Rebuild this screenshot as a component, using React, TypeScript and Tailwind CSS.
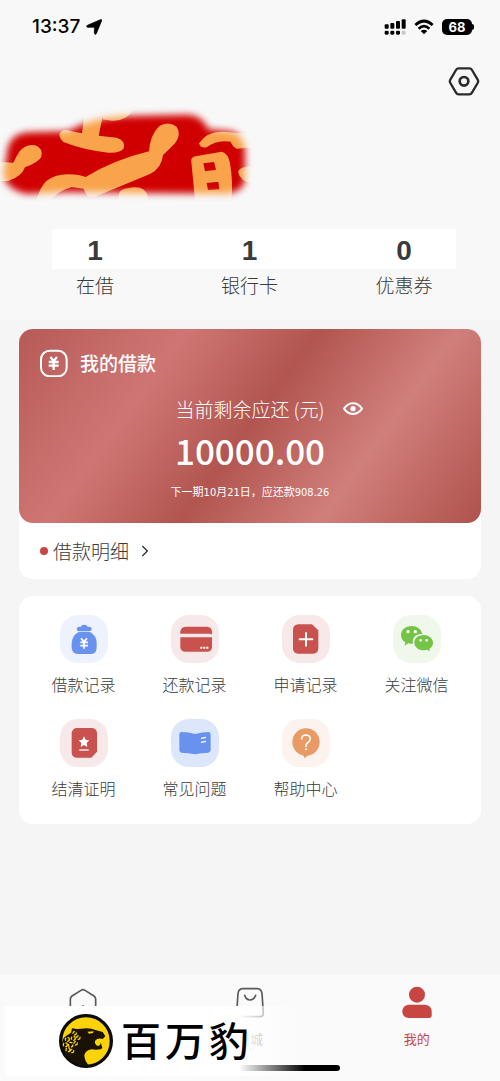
import React from 'react';

const stats = [
  { label: '在借', value: '1' },
  { label: '银行卡', value: '1' },
  { label: '优惠券', value: '0' },
];

const StatusBar: React.FC = () => (
  <div className="flex h-[54px] items-center justify-between pl-8 pr-[26px]">
    <div className="flex items-center gap-1.5">
      <span className="font-['Inter',sans-serif] text-[19px] font-medium leading-6 text-black">13:37</span>
      <svg className="h-4 w-4" viewBox="0 0 48 48">
        <path d="M43 2Q48 0 47 5L31 44Q27 49 25 43V28Q25 25 22 25H5Q-1 23 4 19Z" stroke="#000" strokeWidth="2" />
      </svg>
    </div>
    <div className="flex items-center gap-2">
      <svg className="h-4 w-[22px]" viewBox="0 0 66 48">
        <rect x="2" y="16" width="12" height="13" rx="3" />
        <rect x="19" y="12" width="12" height="17" rx="3" />
        <rect x="36" y="6" width="12" height="23" rx="3" />
        <rect x="53" y="1" width="12" height="28" rx="3" />
        <rect x="2" y="35" width="12" height="12" rx="4" />
        <rect x="19" y="35" width="12" height="12" rx="4" />
        <rect x="36" y="35" width="12" height="12" rx="4" />
        <rect x="53" y="35" width="12" height="12" rx="4" fill="#c9c9c9" />
      </svg>
      <svg className="h-4 w-5" viewBox="0 0 60 48" fill="none" stroke="#000" strokeWidth="8">
        <path d="M4 18Q30-6 56 18" />
        <path d="M14 29Q30 14 46 29" />
        <path d="M30 46L20 36Q30 28 40 36Z" fill="#000" stroke="none" />
      </svg>
      <div className="flex items-center">
        <span className="flex h-4 w-[30px] items-center justify-center rounded-[5px] bg-black font-['Inter',sans-serif] text-[13px] font-bold leading-4 text-white">
          68
        </span>
        <span className="h-1.5 w-0.5 rounded-r bg-black" />
      </div>
    </div>
  </div>
);

const Scribble: React.FC = () => (
  <svg className="mt-[3px] block h-[110px] w-[260px]" viewBox="0 0 780 330">
    <defs>
      <filter id="soft" x="-10%" y="-20%" width="120%" height="140%" colorInterpolationFilters="sRGB">
        <feGaussianBlur stdDeviation="11" />
      </filter>
      <mask id="smear" maskUnits="userSpaceOnUse" x="0" y="0" width="780" height="330">
        <path
          fill="#fff"
          filter="url(#soft)"
          d="M20 170Q22 98 90 97L205 94Q280 50 390 48L560 44Q605 44 625 88L690 94Q735 102 735 160V240Q730 275 680 281L400 279L200 276L80 282Q10 265 10 215Z"
        />
      </mask>
    </defs>
    <g mask="url(#smear)">
      <rect width="780" height="330" fill="#d00000" />
      <g fill="#f9a34b">
        <path d="M0 186L40 188Q48 170 58 155Q78 130 105 136Q130 145 124 170Q118 185 75 202Q65 230 25 243H0Z" />
        <path d="M254 40H310L296 107L350 113Q378 122 371 145Q362 160 325 158Q250 150 190 126Q170 108 184 94Q195 86 215 94L246 100Z" />
        <path d="M310 30H400Q375 65 335 62L308 58Z" />
        <path d="M110 300Q120 260 140 242Q170 222 205 223Q240 224 257 231Q340 180 447 154Q450 105 478 78Q505 62 530 80Q545 105 525 130Q507 149 489 165Q485 205 450 222L285 290H265Q255 280 251 266L215 261Q180 270 150 300Z" />
        <path d="M355 290Q355 268 385 264Q435 255 443 288V300H355Z" />
        <path d="M597 130Q620 95 665 95Q700 97 723 100H760V142L710 146Q697 140 692 125Q650 118 620 142Q600 145 597 130Z" />
        <path d="M574 185Q570 172 590 168L665 155Q685 160 690 190Q700 250 694 300H585ZM610 190L615 214L648 209L642 186ZM620 249L624 270L658 268L655 245Z" fillRule="evenodd" />
        <path d="M714 215Q722 198 760 200V250Q720 245 714 215Z" />
      </g>
    </g>
  </svg>
);

const services = [
  {
    name: '借款记录',
    tile: 'bg-[#edf2fe]',
    icon: (
      <>
        <path d="M57 49Q48 47 51 39Q55 34 61 36Q66 28 73 29Q80 29 84 36Q92 34 95 40Q96 47 88 49Z" fill="#6992ef" />
        <path d="M56 51H90Q110 62 110 84V98Q109 117 92 117H53Q36 115 35 98V84Q36 61 56 51Z" fill="#6992ef" />
        <path d="M63 70L72 80L81 70M72 80V101M61 82H84M61 92H84" fill="none" stroke="#fff" strokeWidth="5" />
      </>
    ),
  },
  {
    name: '还款记录',
    tile: 'bg-[#f7e9ea]',
    icon: (
      <>
        <path d="M28 56V49Q31 36 43 35H108Q122 36 123 49V59Q120 56 116 56Z" fill="#c9524f" />
        <path d="M28 67H123V98Q121 109 109 110H43Q30 109 28 98Z" fill="#c9524f" />
        <path d="M88 98H94M97 98H103M106 98H112" stroke="#fff" strokeWidth="6" />
      </>
    ),
  },
  {
    name: '申请记录',
    tile: 'bg-[#f7e9ea]',
    icon: (
      <>
        <path d="M49 28H90L109 46V101Q108 115 94 116H48Q34 115 33 101V44Q34 29 49 28Z" fill="#c9524f" />
        <path d="M72 54V92M53 73H91" stroke="#fff" strokeWidth="6" strokeLinecap="round" />
      </>
    ),
  },
  {
    name: '关注微信',
    tile: 'bg-[#f0f8eb]',
    icon: (
      <>
        <path d="M56 33C38 33 24 44 24 60C24 69 29 77 37 82L35 92L46 85Q52 87 60 86C56 68 70 55 88 57C85 43 72 33 56 33Z" fill="#74c448" />
        <path d="M92 60C75 60 64 71 64 83C64 96 77 106 92 106L102 104L111 109L109 101C116 97 120 91 120 83C120 70 107 60 92 60Z" fill="#74c448" />
        <circle cx="45" cy="50" r="5" fill="#fff" />
        <circle cx="67" cy="50" r="5" fill="#fff" />
        <circle cx="83" cy="76" r="4" fill="#fff" />
        <circle cx="101" cy="76" r="4" fill="#fff" />
      </>
    ),
  },
  {
    name: '结清证明',
    tile: 'bg-[#f7e9ea]',
    icon: (
      <>
        <path d="M49 27H96Q110 29 111 42V98L94 116H49Q36 114 35 101V43Q36 29 49 27Z" fill="#c9524f" />
        <path d="M72 52L77 62L88 64L80 72L82 84L72 78L62 84L64 72L56 64L67 62Z" fill="#fff" />
        <path d="M58 93H86" stroke="#fff" strokeWidth="4" />
      </>
    ),
  },
  {
    name: '常见问题',
    tile: 'bg-[#dce7fc]',
    icon: (
      <>
        <path d="M31 39Q52 39 73 45Q94 39 113 39Q119 40 119 46V94Q118 100 112 101Q92 102 72 106Q52 102 31 101Q25 99 25 94V45Q26 39 31 39Z" fill="#6992ef" />
        <path d="M90 58L105 55M90 70L105 67" stroke="#fff" strokeWidth="4" />
      </>
    ),
  },
  {
    name: '帮助中心',
    tile: 'bg-[#fcf3ee]',
    icon: (
      <>
        <circle cx="72" cy="69" r="41" fill="#e99b66" />
        <path d="M62 106L68 118L80 107Z" fill="#e99b66" />
        <path d="M59 60Q59 48 72 48Q85 49 85 60Q84 67 77 71Q72 75 72 82" fill="none" stroke="#fff" strokeWidth="5" strokeLinecap="round" />
        <circle cx="72" cy="91" r="3" fill="#fff" />
      </>
    ),
  },
];

const Leopard: React.FC = () => (
  <svg className="h-[54px] w-[54px]" viewBox="178 136 162 162">
    <circle cx="259" cy="217" r="76" fill="#fbd307" stroke="#0c0a08" strokeWidth="10" />
    <path
      fill="#1a1206"
      d="M214 192L217 179L232 181L244 180Q272 176 287 184L309 190L317 203L309 211Q293 207 286 217Q284 228 295 232Q304 230 303 220L308 238L303 242Q288 244 276 242Q257 246 254 259Q254 278 270 292Q205 297 186 230Q188 209 198 203Z"
    />
    <path d="M263 189L282 188L280 193L268 195Z" fill="#fbd307" />
    <g fill="none" stroke="#fbd307" strokeWidth="4" strokeDasharray="9 4">
      <circle cx="203" cy="212" r="6" />
      <circle cx="221" cy="209" r="6" />
      <circle cx="236" cy="207" r="5" />
      <circle cx="197" cy="228" r="6" />
      <circle cx="213" cy="228" r="7" />
      <circle cx="228" cy="224" r="5" />
      <circle cx="205" cy="243" r="6" />
      <circle cx="217" cy="247" r="5" />
      <circle cx="225" cy="194" r="5" />
    </g>
  </svg>
);

const BottomNav: React.FC = () => (
  <nav className="relative mt-auto bg-[#fafafa] pb-2.5 pt-[11px]">
    <div className="grid grid-cols-3 text-[13px] leading-[18px]">
      <a href="#home" aria-label="首页" className="flex flex-col items-center">
        <svg className="h-8 w-8" viewBox="0 0 96 96" fill="none" stroke="#5a5a5a" strokeWidth="5">
          <path d="M10 82V40Q10 34 15 30L42 13Q48 9 54 13L81 30Q86 34 86 40V82Q86 90 78 90H18Q10 90 10 82Z" />
          <path d="M48 58V72" />
        </svg>
      </a>
      <a href="#mall" className="flex flex-col items-center gap-3 text-[#777]">
        <svg className="h-8 w-8" viewBox="0 0 96 96" fill="none" stroke="#5a5a5a" strokeWidth="5">
          <path d="M26 8H70Q82 9 84 22L88 82Q88 92 78 92H18Q8 92 8 82L12 22Q14 9 26 8Z" />
          <path d="M32 28Q36 42 48 42Q60 42 65 28" strokeLinecap="round" />
        </svg>
        <span>商城</span>
      </a>
      <a href="#mine" className="flex flex-col items-center gap-3 text-[#c74642]">
        <svg className="h-8 w-8" viewBox="0 0 96 96" fill="currentColor">
          <circle cx="48" cy="26" r="24" />
          <path d="M22 56H72Q92 58 92 76V90Q91 96 84 96H22Q4 94 4 76Q5 58 22 56Z" />
        </svg>
        <span>我的</span>
      </a>
    </div>
    <div className="mx-auto mt-[17px] h-1.5 w-[180px] rounded-full bg-black" />

    {/* Brand overlay */}
    <div className="absolute left-[5px] top-[31px] flex h-[70px] w-[300px] items-center gap-2 bg-linear-to-r from-white from-78% to-transparent pl-[54px]">
      <Leopard />
      <div className="flex gap-1 pb-1 text-[40px] font-medium leading-[54px] text-black">
        <span>百</span>
        <span>万</span>
        <span>豹</span>
      </div>
    </div>
  </nav>
);

const App: React.FC = () => {
  return (
    <div className="flex min-h-screen flex-col bg-[#f5f5f5] font-['Noto_Sans_CJK_SC',sans-serif] text-[#3a3a3a]">
      <header className="bg-[#f8f8f8] pb-[21px]">
        <StatusBar />
        <div className="flex justify-end pr-5 pt-3">
          <button type="button" aria-label="设置">
            <svg className="block h-[31px] w-8" viewBox="0 0 96 93" fill="none" stroke="#2b2b2b" strokeWidth="7" strokeLinejoin="round">
              <path d="M32 7H64Q69 7 72 12L89 41Q92 46 89 51L72 80Q69 85 64 85H32Q27 85 24 80L7 51Q4 46 7 41L24 12Q27 7 32 7Z" />
              <circle cx="48" cy="46" r="13" strokeWidth="8" />
            </svg>
          </button>
        </div>
        <Scribble />

        <div className="ml-[52px] mr-11 mt-[19px] flex h-10 items-center justify-between bg-white pr-[9px] pt-1">
          {stats.map((s) => (
            <span key={s.label} className="w-[86px] text-center font-['Liberation_Sans',sans-serif] text-[28px] font-bold leading-8">
              {s.value}
            </span>
          ))}
        </div>
        <div className="ml-[52px] mr-11 mt-0.5 flex justify-between pr-[9px]">
          {stats.map((s) => (
            <span key={s.label} className="w-[86px] text-center text-[19px] font-light leading-7">
              {s.label}
            </span>
          ))}
        </div>
      </header>

      <main className="px-[19px] pb-10 pt-[9px]">
        {/* Loan card */}
        <section className="rounded-[14px] bg-white">
          <div className="rounded-[14px] bg-[linear-gradient(126deg,#b65a57_0%,#cf7674_28%,#b25550_50%,#d07f7b_73%,#b25550_98%)] px-[21px] pb-[22px] pt-5 text-white">
            <div className="flex h-7 items-center gap-3">
              <svg className="h-7 w-7" viewBox="0 0 84 84" fill="none" stroke="#fff" strokeWidth="6">
                <rect x="3" y="5" width="77" height="77" rx="26" />
                <path d="M31 24L41 36L51 24M41 36V63M26 39H56M26 50H56" strokeWidth="7" />
              </svg>
              <h2 className="text-[19px] font-medium leading-7">我的借款</h2>
            </div>
            <div className="mt-[18px] flex items-center justify-center gap-[18px] pl-[38px]">
              <span className="text-[19px] font-light leading-7">当前剩余应还 (元)</span>
              <button type="button" aria-label="隐藏金额">
                <svg className="block h-5 w-5" viewBox="0 0 60 60" fill="none" stroke="#fff" strokeWidth="6">
                  <path d="M3 29Q14 13 30 13Q46 13 57 29Q46 45 30 45Q14 45 3 29Z" />
                  <circle cx="30" cy="29" r="8" fill="#fff" stroke="none" />
                </svg>
              </button>
            </div>
            <p className="mt-[7px] text-center text-[35px] font-medium leading-10">10000.00</p>
            <p className="mt-[15px] text-center font-['DejaVu_Sans_Condensed','Noto_Sans_CJK_SC',sans-serif] text-[11px] leading-4">
              下一期10月21日，应还款908.26
            </p>
          </div>
          <a href="#detail" className="flex h-14 items-center px-[21px]">
            <span className="mr-[5px] h-2 w-2 rounded-full bg-[#c74642]" />
            <span className="text-[19px] font-light leading-7">借款明细</span>
            <svg className="ml-3 h-3 w-2" viewBox="0 0 24 36" fill="none" stroke="#333" strokeWidth="4">
              <path d="M4 3L19 18L4 33" />
            </svg>
          </a>
        </section>

        {/* Services */}
        <section className="mt-[17px] grid grid-cols-4 gap-y-[23px] rounded-[14px] bg-white px-[9px] pb-6 pt-[19px]">
          {services.map((item) => (
            <a key={item.name} href="#service" className="flex flex-col items-center gap-[9px]">
              <span className={`rounded-[18px] ${item.tile}`}>
                <svg className="block h-12 w-12" viewBox="0 0 144 144">
                  {item.icon}
                </svg>
              </span>
              <span className="text-base font-light leading-6">{item.name}</span>
            </a>
          ))}
        </section>
      </main>

      <BottomNav />
    </div>
  );
};

export default App;
